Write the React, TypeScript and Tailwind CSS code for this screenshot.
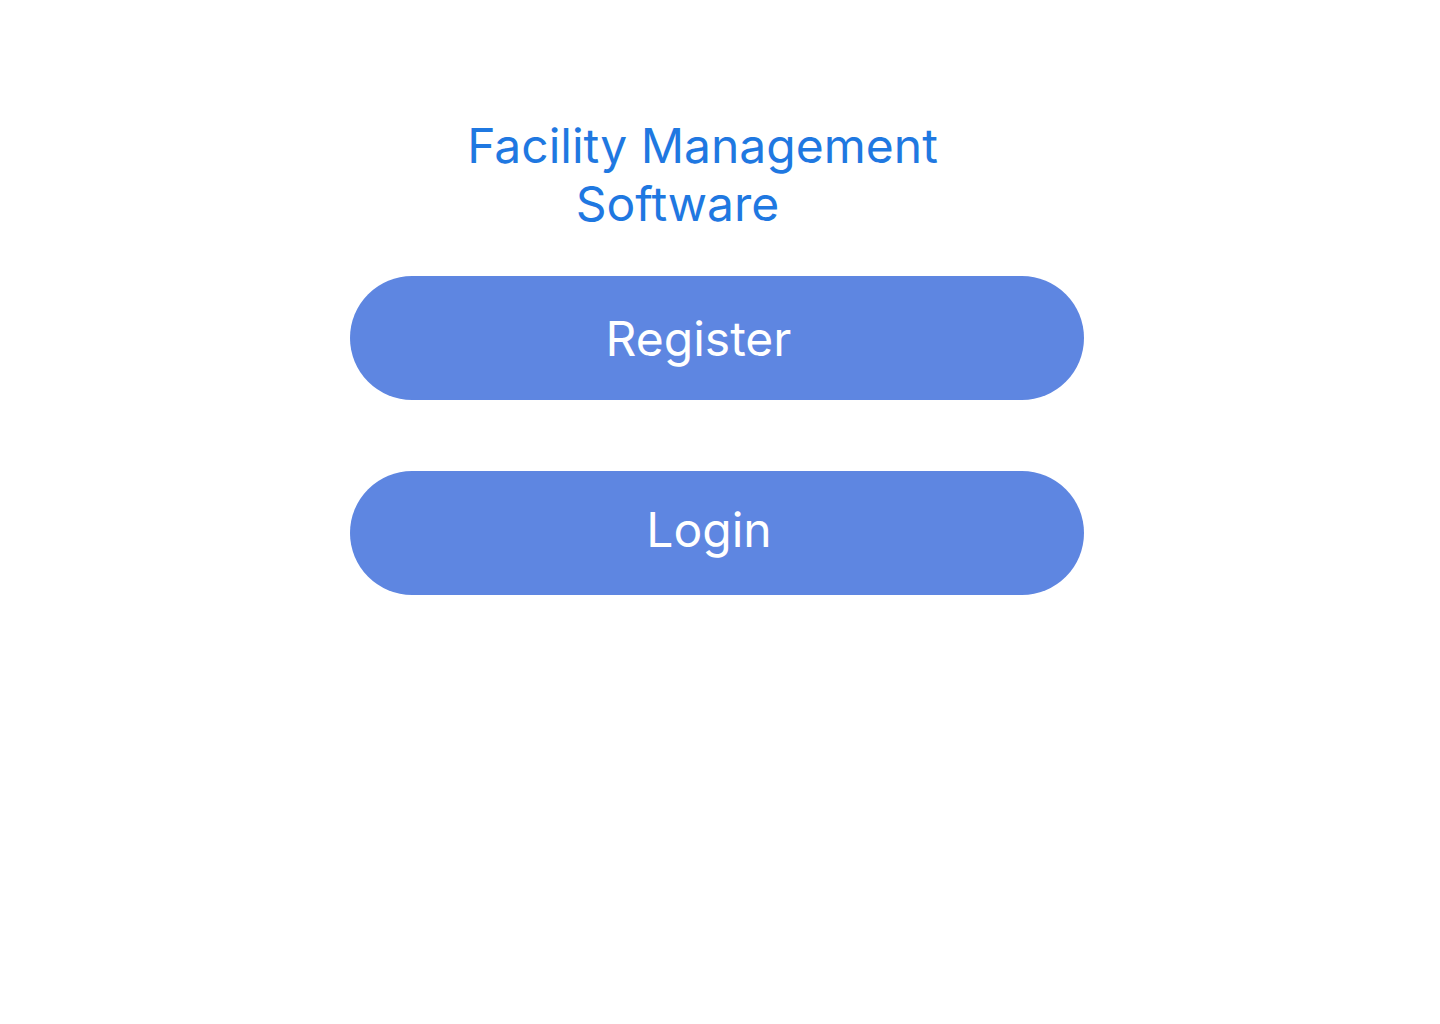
export default function App() {
  return (
    <div className="w-[1440px] h-[1024px] bg-white" style={{ fontFamily: "Inter, 'Noto Sans', sans-serif" }}>
      <div className="pt-[117px] text-[48px] leading-[58px] text-[#1f78e1]">
        <div className="text-center pr-[35px]">Facility Management</div>
        <div className="text-center pr-[85px]">Software</div>
      </div>
      <div className="mt-[43px] ml-[350px] w-[734px] flex flex-col gap-[71px]">
        <button className="h-[124px] rounded-full bg-[#5e86e1] text-white text-[48px] leading-[58px] flex items-center justify-center pr-[37px] pt-[2px]">
          Register
        </button>
        <button className="h-[124px] rounded-full bg-[#5e86e1] text-white text-[48px] leading-[58px] flex items-center justify-center pr-[16px] pb-[6px]">
          Login
        </button>
      </div>
    </div>
  );
}
